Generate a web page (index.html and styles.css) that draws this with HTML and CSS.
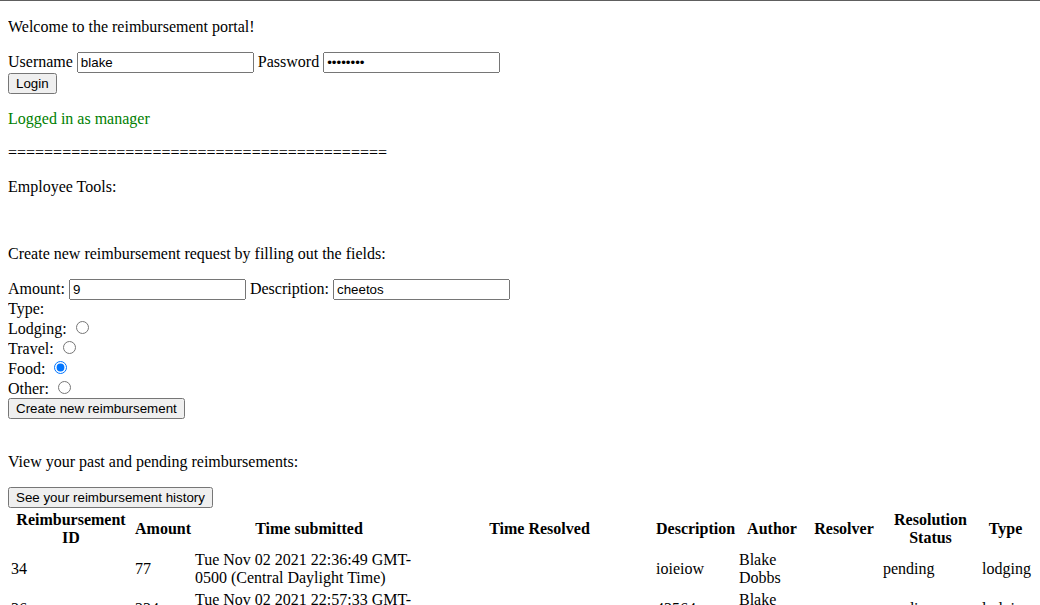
FILE: index.html
```html
<!DOCTYPE html>
<html class="page">
<head>
<meta charset="utf-8">
<title>Reimbursement Portal</title>
<link rel="stylesheet" href="styles.css">
</head>
<body class="body">
<p class="para">Welcome to the reimbursement portal!</p>
<div class="para">Username <input class="text-input" type="text" value="blake"> Password <input class="text-input" type="password" value="password"><br><button class="btn" type="button">Login</button></div>
<p class="para status-ok">Logged in as manager</p>
<p class="para">==========================================</p>
<p class="para">Employee Tools:</p>
<p class="para create-title">Create new reimbursement request by filling out the fields:</p>
<div class="reimb-form">
Amount: <input class="text-input" type="text" value="9"> Description: <input class="text-input" type="text" value="cheetos"><br>
Type:<br>
Lodging: <input class="radio" type="radio" name="type" value="lodging"><br>
Travel: <input class="radio" type="radio" name="type" value="travel"><br>
Food: <input class="radio" type="radio" name="type" value="food" checked><br>
Other: <input class="radio" type="radio" name="type" value="other"><br>
<button class="btn" type="button">Create new reimbursement</button>
</div>
<p class="para view-title">View your past and pending reimbursements:</p>
<div class="history">
<button class="btn" type="button">See your reimbursement history</button>
<table class="data-table">
<thead>
<tr>
<th class="cell head c-id">Reimbursement ID</th>
<th class="cell head c-amount">Amount</th>
<th class="cell head c-sub">Time submitted</th>
<th class="cell head c-res">Time Resolved</th>
<th class="cell head c-desc">Description</th>
<th class="cell head c-author">Author</th>
<th class="cell head c-resolver">Resolver</th>
<th class="cell head c-status">Resolution Status</th>
<th class="cell head c-type">Type</th>
</tr>
</thead>
<tbody>
<tr>
<td class="cell">34</td>
<td class="cell">77</td>
<td class="cell">Tue Nov 02 2021 22:36:49 GMT-0500 (Central Daylight Time)</td>
<td class="cell"></td>
<td class="cell">ioieiow</td>
<td class="cell">Blake Dobbs</td>
<td class="cell"></td>
<td class="cell">pending</td>
<td class="cell">lodging</td>
</tr>
<tr>
<td class="cell">36</td>
<td class="cell">234</td>
<td class="cell">Tue Nov 02 2021 22:57:33 GMT-0500 (Central Daylight Time)</td>
<td class="cell"></td>
<td class="cell">43564</td>
<td class="cell">Blake Dobbs</td>
<td class="cell"></td>
<td class="cell">pending</td>
<td class="cell">lodging</td>
</tr>
</tbody>
</table>
</div>
</body>
</html>
```
FILE: styles.css
```css
.page {
  border-top: 1px solid #5e5e5e;
  background: #ffffff;
}

.body {
  margin: 0 8px 8px 8px;
  padding-top: 1px;
  font-family: "Liberation Serif", "Times New Roman", serif;
  font-size: 16px;
  color: #000000;
}

.para {
  margin: 16px 0;
}

.status-ok {
  color: #008000;
}

.create-title {
  margin-top: 49px;
  margin-bottom: 16px;
}

.reimb-form {
  margin: 0;
}

.view-title {
  margin-top: 34px;
  margin-bottom: 16px;
}

.text-input {
  box-sizing: border-box;
  width: 177px;
  height: 21px;
  font-family: Arial, "Liberation Sans", sans-serif;
  font-size: 13.3333px;
  padding: 1px 2px;
  margin: 0;
}

.btn {
  font-family: Arial, "Liberation Sans", sans-serif;
  font-size: 13.3333px;
  padding: 1px 6px;
  margin: 0;
}

.radio {
  margin: 3px 3px 0 5px;
}

.data-table {
  width: 100%;
  table-layout: fixed;
  border-spacing: 2px;
  font-size: 16px;
}

.cell {
  padding: 1px;
  vertical-align: middle;
  text-align: left;
  font-weight: normal;
}

.head {
  box-sizing: border-box;
  text-align: center;
  font-weight: bold;
}

.c-id { width: 122px; }
.c-amount { width: 58px; }
.c-sub { width: 230px; }
.c-res { width: 227px; }
.c-desc { width: 81px; }
.c-author { width: 68px; }
.c-resolver { width: 72px; }
.c-status { width: 97px; }
.c-type { width: 49px; }
```
